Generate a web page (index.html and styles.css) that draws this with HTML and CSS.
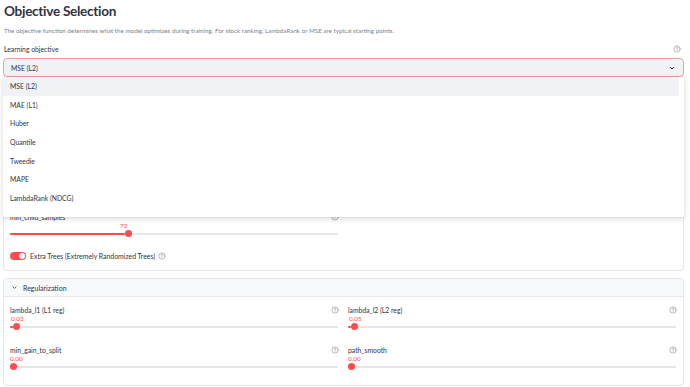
FILE: index.html
```html
<!DOCTYPE html>
<html>
<head>
<meta charset="utf-8">
<link rel="stylesheet" href="styles.css">
</head>
<body>
<div class="main">
  <h1 class="title">Objective Selection</h1>
  <p class="caption">The objective function determines what the model optimizes during training. For stock ranking, LambdaRank or MSE are typical starting points.</p>

  <div class="field">
    <div class="label-row">
      <span class="label">Learning objective</span>
      <svg class="help" viewBox="0 0 16 16"><circle cx="8" cy="8" r="6.3"/><path d="M6.1 6.2a1.9 1.9 0 1 1 2.7 1.7c-.5.3-.8.6-.8 1.2v.4"/><circle class="dot" cx="8" cy="11.4" r=".6"/></svg>
    </div>
    <div class="select-wrap">
      <div class="select">
        <span>MSE (L2)</span>
        <svg class="chev" viewBox="0 0 16 16"><path d="M4.5 6.5l3.5 3.5 3.5-3.5"/></svg>
      </div>
      <ul class="menu">
        <li class="active">MSE (L2)</li>
        <li>MAE (L1)</li>
        <li>Huber</li>
        <li>Quantile</li>
        <li>Tweedie</li>
        <li>MAPE</li>
        <li>LambdaRank (NDCG)</li>
      </ul>
    </div>
  </div>

  <section class="card">
    <div class="grid">
      <div class="slider-block">
        <div class="label-row"><span class="label">num_leaves</span><svg class="help" viewBox="0 0 16 16"><circle cx="8" cy="8" r="6.3"/><path d="M6.1 6.2a1.9 1.9 0 1 1 2.7 1.7c-.5.3-.8.6-.8 1.2v.4"/><circle class="dot" cx="8" cy="11.4" r=".6"/></svg></div>
        <div class="value" style="padding-left:80px">31</div>
        <div class="slider"><div class="fill" style="width:25%"></div><div class="thumb" style="left:25%"></div></div>
      </div>
      <div class="slider-block">
        <div class="label-row"><span class="label">max_depth</span><svg class="help" viewBox="0 0 16 16"><circle cx="8" cy="8" r="6.3"/><path d="M6.1 6.2a1.9 1.9 0 1 1 2.7 1.7c-.5.3-.8.6-.8 1.2v.4"/><circle class="dot" cx="8" cy="11.4" r=".6"/></svg></div>
        <div class="value" style="padding-left:100px">6</div>
        <div class="slider"><div class="fill" style="width:31%"></div><div class="thumb" style="left:31%"></div></div>
      </div>
      <div class="slider-block">
        <div class="label-row"><span class="label">learning_rate</span><svg class="help" viewBox="0 0 16 16"><circle cx="8" cy="8" r="6.3"/><path d="M6.1 6.2a1.9 1.9 0 1 1 2.7 1.7c-.5.3-.8.6-.8 1.2v.4"/><circle class="dot" cx="8" cy="11.4" r=".6"/></svg></div>
        <div class="value" style="padding-left:20px">0.05</div>
        <div class="slider"><div class="fill" style="width:8%"></div><div class="thumb" style="left:8%"></div></div>
      </div>
      <div class="slider-block">
        <div class="label-row"><span class="label">n_estimators</span><svg class="help" viewBox="0 0 16 16"><circle cx="8" cy="8" r="6.3"/><path d="M6.1 6.2a1.9 1.9 0 1 1 2.7 1.7c-.5.3-.8.6-.8 1.2v.4"/><circle class="dot" cx="8" cy="11.4" r=".6"/></svg></div>
        <div class="value" style="padding-left:60px">500</div>
        <div class="slider"><div class="fill" style="width:20%"></div><div class="thumb" style="left:20%"></div></div>
      </div>
      <div class="slider-block">
        <div class="label-row"><span class="label">feature_fraction</span><svg class="help" viewBox="0 0 16 16"><circle cx="8" cy="8" r="6.3"/><path d="M6.1 6.2a1.9 1.9 0 1 1 2.7 1.7c-.5.3-.8.6-.8 1.2v.4"/><circle class="dot" cx="8" cy="11.4" r=".6"/></svg></div>
        <div class="value" style="padding-left:250px">0.80</div>
        <div class="slider"><div class="fill" style="width:78%"></div><div class="thumb" style="left:78%"></div></div>
      </div>
      <div class="slider-block">
        <div class="label-row"><span class="label">bagging_fraction</span><svg class="help" viewBox="0 0 16 16"><circle cx="8" cy="8" r="6.3"/><path d="M6.1 6.2a1.9 1.9 0 1 1 2.7 1.7c-.5.3-.8.6-.8 1.2v.4"/><circle class="dot" cx="8" cy="11.4" r=".6"/></svg></div>
        <div class="value" style="padding-left:250px">0.80</div>
        <div class="slider"><div class="fill" style="width:78%"></div><div class="thumb" style="left:78%"></div></div>
      </div>
      <div class="slider-block">
        <div class="label-row"><span class="label">min_child_samples</span><svg class="help" viewBox="0 0 16 16"><circle cx="8" cy="8" r="6.3"/><path d="M6.1 6.2a1.9 1.9 0 1 1 2.7 1.7c-.5.3-.8.6-.8 1.2v.4"/><circle class="dot" cx="8" cy="11.4" r=".6"/></svg></div>
        <div class="value" style="padding-left:110px">72</div>
        <div class="slider"><div class="fill" style="width:35%"></div><div class="thumb" style="left:35%"></div></div>
      </div>
      <div></div>
    </div>
    <div class="toggle-row">
      <span class="toggle"><span class="knob"></span></span>
      <span class="toggle-label">Extra Trees (Extremely Randomized Trees)</span>
      <svg class="help" viewBox="0 0 16 16"><circle cx="8" cy="8" r="6.3"/><path d="M6.1 6.2a1.9 1.9 0 1 1 2.7 1.7c-.5.3-.8.6-.8 1.2v.4"/><circle class="dot" cx="8" cy="11.4" r=".6"/></svg>
    </div>
  </section>

  <section class="card expander">
    <div class="exp-head">
      <svg class="exp-chev" viewBox="0 0 16 16"><path d="M4.5 6.5l3.5 3.5 3.5-3.5"/></svg>
      <span>Regularization</span>
    </div>
    <div class="exp-body grid">
      <div class="slider-block">
        <div class="label-row"><span class="label">lambda_l1 (L1 reg)</span><svg class="help" viewBox="0 0 16 16"><circle cx="8" cy="8" r="6.3"/><path d="M6.1 6.2a1.9 1.9 0 1 1 2.7 1.7c-.5.3-.8.6-.8 1.2v.4"/><circle class="dot" cx="8" cy="11.4" r=".6"/></svg></div>
        <div class="value" style="padding-left:1px">0.03</div>
        <div class="slider"><div class="fill" style="width:1%"></div><div class="thumb" style="left:1%"></div></div>
      </div>
      <div class="slider-block">
        <div class="label-row"><span class="label">lambda_l2 (L2 reg)</span><svg class="help" viewBox="0 0 16 16"><circle cx="8" cy="8" r="6.3"/><path d="M6.1 6.2a1.9 1.9 0 1 1 2.7 1.7c-.5.3-.8.6-.8 1.2v.4"/><circle class="dot" cx="8" cy="11.4" r=".6"/></svg></div>
        <div class="value" style="padding-left:1px">0.05</div>
        <div class="slider"><div class="fill" style="width:1%"></div><div class="thumb" style="left:1%"></div></div>
      </div>
      <div class="slider-block">
        <div class="label-row"><span class="label">min_gain_to_split</span><svg class="help" viewBox="0 0 16 16"><circle cx="8" cy="8" r="6.3"/><path d="M6.1 6.2a1.9 1.9 0 1 1 2.7 1.7c-.5.3-.8.6-.8 1.2v.4"/><circle class="dot" cx="8" cy="11.4" r=".6"/></svg></div>
        <div class="value" style="padding-left:0">0.00</div>
        <div class="slider"><div class="fill" style="width:0%"></div><div class="thumb" style="left:0%"></div></div>
      </div>
      <div class="slider-block">
        <div class="label-row"><span class="label">path_smooth</span><svg class="help" viewBox="0 0 16 16"><circle cx="8" cy="8" r="6.3"/><path d="M6.1 6.2a1.9 1.9 0 1 1 2.7 1.7c-.5.3-.8.6-.8 1.2v.4"/><circle class="dot" cx="8" cy="11.4" r=".6"/></svg></div>
        <div class="value" style="padding-left:0">0.00</div>
        <div class="slider"><div class="fill" style="width:0%"></div><div class="thumb" style="left:0%"></div></div>
      </div>
    </div>
  </section>
</div>
</body>
</html>
```

FILE: styles.css
```css
* { box-sizing: border-box; }
html, body { margin: 0; padding: 0; background: #ffffff; }
body {
  font-family: Lato, "Noto Sans", sans-serif;
  color: #31333f;
  overflow: hidden;
}
.main {
  padding: 2px 6px 0 3px;
}
.title {
  margin: 0 0 0 1px;
  font-size: 13.6px;
  line-height: 19px;
  font-weight: 700;
  letter-spacing: -0.3px;
}
.caption {
  margin: 5px 0 0 1px;
  font-size: 6.25px;
  line-height: 10px;
  color: #7d808b;
}
.field { margin-top: 8px; }
.label-row {
  display: flex;
  align-items: center;
  justify-content: space-between;
  height: 10px;
}
.label {
  font-size: 6.8px;
  line-height: 10px;
}
.field > .label-row { padding: 0 3px 0 1px; }
.help {
  width: 8px;
  height: 8px;
  fill: none;
  stroke: #8a8c96;
  stroke-width: 1.2;
  stroke-linecap: round;
  flex: none;
}
.help .dot { fill: #8a8c96; stroke: none; }

.select-wrap { position: relative; margin-top: 4px; }
.select {
  height: 19px;
  border: 1px solid #f3a09d;
  border-radius: 4px;
  background: #f0f2f6;
  display: flex;
  align-items: center;
  justify-content: space-between;
  padding: 0 7px 0 7px;
  font-size: 6.8px;
}
.chev {
  width: 8px;
  height: 8px;
  fill: none;
  stroke: #31333f;
  stroke-width: 1.8;
  stroke-linecap: round;
  stroke-linejoin: round;
}
.menu {
  position: absolute;
  left: 0;
  top: 19px;
  width: 681px;
  height: 140px;
  overflow: hidden;
  margin: 0;
  padding: 0 5px 0 0;
  list-style: none;
  background: #ffffff;
  box-shadow: 0 2px 6px rgba(0,0,0,0.14), 0 0 1px rgba(0,0,0,0.12);
  z-index: 10;
}
.menu li {
  height: 18.7px;
  line-height: 18.7px;
  padding-left: 7px;
  font-size: 6.8px;
}
.menu li.active { background: #f0f2f6; }

.card {
  margin-top: 8px;
  border: 1px solid #e3e4e8;
  border-radius: 4px;
  padding: 6px 6px 9px 6px;
}
.grid {
  display: grid;
  grid-template-columns: 1fr 1fr;
  column-gap: 9px;
  row-gap: 15px;
}
.slider-block { display: flex; flex-direction: column; }
.value {
  font-size: 6.4px;
  line-height: 8px;
  color: #ff4b4b;
  height: 8px;
}
.slider {
  position: relative;
  height: 7px;
  margin: 0 1px 0 0;
}
.slider::before {
  content: "";
  position: absolute;
  left: 0; right: 0;
  top: 2.5px;
  height: 2px;
  border-radius: 1px;
  background: #e4e6eb;
}
.fill {
  position: absolute;
  left: 0;
  top: 2.5px;
  height: 2px;
  border-radius: 1px;
  background: #ff4b4b;
}
.thumb {
  position: absolute;
  top: 0;
  width: 7px;
  height: 7px;
  border-radius: 50%;
  background: #ff4b4b;
}
.toggle-row {
  display: flex;
  align-items: center;
  gap: 3px;
  margin-top: 14px;
  height: 10px;
}
.toggle {
  width: 16px;
  height: 8px;
  border-radius: 4px;
  background: #ff4b4b;
  display: flex;
  align-items: center;
  justify-content: flex-end;
  padding-right: 1px;
  margin-right: 1px;
}
.knob {
  width: 6px;
  height: 6px;
  border-radius: 50%;
  background: #fff;
}
.toggle-label { font-size: 6.9px; line-height: 10px; }

.expander { padding: 0; margin-top: 7px; }
.exp-head {
  height: 18px;
  background: #f8f9fb;
  border-bottom: 1px solid #e6e7eb;
  display: flex;
  align-items: center;
  gap: 5px;
  padding-left: 7px;
  font-size: 7px;
  border-radius: 4px 4px 0 0;
}
.exp-chev {
  width: 7px;
  height: 7px;
  fill: none;
  stroke: #31333f;
  stroke-width: 1.8;
  stroke-linecap: round;
  stroke-linejoin: round;
}
.exp-body { padding: 8px 6px 15px 6px; }
```
